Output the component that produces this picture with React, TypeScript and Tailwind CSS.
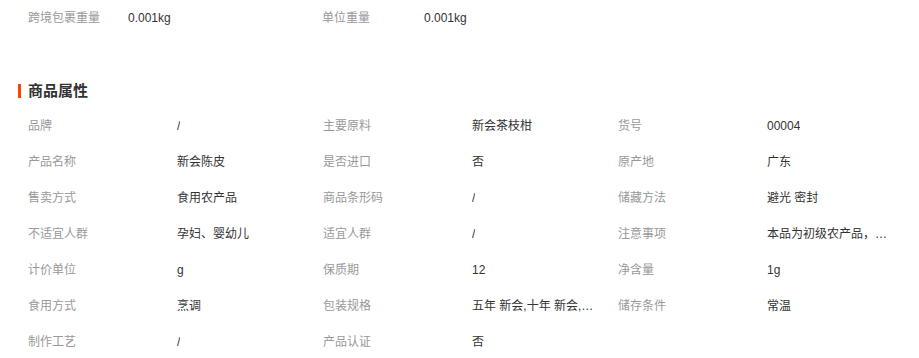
const attrs: [string, string][] = [
  ['品牌', '/'],
  ['主要原料', '新会茶枝柑'],
  ['货号', '00004'],
  ['产品名称', '新会陈皮'],
  ['是否进口', '否'],
  ['原产地', '广东'],
  ['售卖方式', '食用农产品'],
  ['商品条形码', '/'],
  ['储藏方法', '避光 密封'],
  ['不适宜人群', '孕妇、婴幼儿'],
  ['适宜人群', '/'],
  ['注意事项', '本品为初级农产品，按规定无需标注食品生产许可证编号'],
  ['计价单位', 'g'],
  ['保质期', '12'],
  ['净含量', '1g'],
  ['食用方式', '烹调'],
  ['包装规格', '五年 新会,十年 新会,十五年 新会'],
  ['储存条件', '常温'],
  ['制作工艺', '/'],
  ['产品认证', '否'],
];

export default function App() {
  return (
    <div className="min-h-[358px] bg-white pl-[28px] text-[12px] font-['Liberation_Sans','Noto_Sans_CJK_SC',sans-serif]">
      {/* 包裹重量 */}
      <div className="flex h-[36px] items-center">
        <div className="flex w-[294px] items-center">
          <span className="w-[100px] text-[#999]">跨境包裹重量</span>
          <span className="text-[#333]">0.001kg</span>
        </div>
        <div className="flex items-center">
          <span className="w-[102px] text-[#999]">单位重量</span>
          <span className="text-[#333]">0.001kg</span>
        </div>
      </div>

      {/* 商品属性 */}
      <div className="relative mt-[45px] flex h-[20px] items-center">
        <span className="absolute -left-[10px] top-[3px] h-[14px] w-[3px] bg-[#ff4400]" />
        <h2 className="text-[15px] font-bold text-[#333]">商品属性</h2>
      </div>

      <div className="mt-[7px] grid grid-cols-[149px_146px_149px_146px_149px_auto]">
        {attrs.map(([label, value]) => (
          <div key={label} className="contents">
            <div className="flex h-[36px] items-center text-[#999]">{label}</div>
            <div className="flex h-[36px] items-center text-[#333]">
              <span className="block max-w-[124px] overflow-hidden text-ellipsis whitespace-nowrap">{value}</span>
            </div>
          </div>
        ))}
      </div>
    </div>
  );
}
